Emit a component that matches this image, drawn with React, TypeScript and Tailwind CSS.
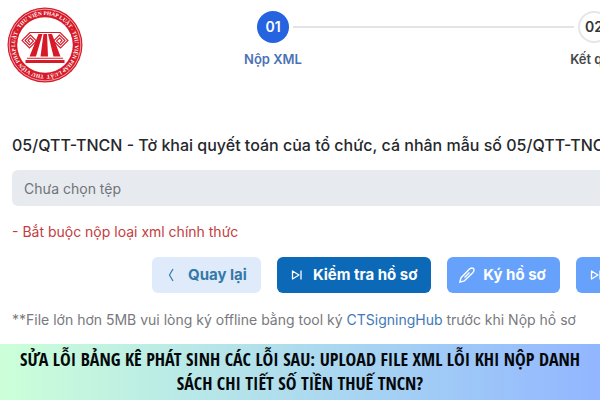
import type { ReactNode } from 'react';

function SkipIcon() {
  return (
    <svg className="size-4 shrink-0" viewBox="0 0 16 16" fill="none" stroke="currentColor" strokeWidth="1.3" strokeLinejoin="round" aria-hidden="true">
      <path d="M3.5 4 L10 8 L3.5 12 Z M12 3.5 V12.5" />
    </svg>
  );
}

function ChevronIcon() {
  return (
    <svg className="size-4 shrink-0" viewBox="0 0 16 16" fill="none" stroke="currentColor" strokeWidth="1.2" aria-hidden="true">
      <path d="M9 2 L5.5 8 L9 14" />
    </svg>
  );
}

function PenIcon() {
  return (
    <svg className="size-4 shrink-0" viewBox="0 0 16 16" fill="none" stroke="currentColor" strokeWidth="1.4" strokeLinejoin="round" aria-hidden="true">
      <path d="M.8 15.2 L2 10.8 L10.5 2 Q12.8 .2 14.4 1.4 Q15.8 3 14 5.4 L5.4 13.8 Z M10.5 5.5 L5.5 10.5" />
    </svg>
  );
}

function Logo() {
  return (
    <svg className="size-20 shrink-0" viewBox="0 0 80 80" role="img" aria-label="Thư Viện Pháp Luật">
      <defs>
        <path id="ring" d="M40 70 A30 30 0 0 1 40 10 A30 30 0 0 1 40 70" />
      </defs>
      <circle cx="40" cy="40" r="37.5" fill="#d71a28" />
      <circle cx="40" cy="40" r="35.8" fill="none" stroke="#fff" strokeWidth=".6" />
      <circle cx="40" cy="40" r="27.8" fill="#fff" />
      <text fill="#fff" fontFamily="Liberation Serif, serif" fontWeight="700" fontSize="5.4">
        <textPath href="#ring" startOffset="1">THƯ VIỆN PHÁP LUẬT - THƯ VIỆN PHÁP LUẬT - THƯ VIỆN PHÁP LUẬT -</textPath>
      </text>
      <g fill="none" stroke="#d71a28" strokeWidth="1.1">
        <path d="M25 27.5 H55 M25 27.5 L17 35.5 L24.5 43 L31.5 36 L25.5 30 L20 35.5 L24.5 40 L28.5 36 L25.3 33 L23 35.5 L25 37.5" />
        <path d="M55 27.5 L63 35.5 L55.5 43 L48.5 36 L54.5 30 L60 35.5 L55.5 40 L51.5 36 L54.7 33 L57 35.5 L55 37.5" />
      </g>
      <g fill="#d71a28">
        <path d="M33.5 29 H37.5 L31 51.5 H24.5 Z M38.5 29 H42 L43 51.5 H35.5 Z M43 29 H47 L55.5 51.5 H48.5 Z" />
        <path d="M22 52.8 H58 V53.8 H22 Z" />
        <path d="M20.5 55 H59.5 V58 H20.5 Z" />
      </g>
    </svg>
  );
}

function Step({ number, label, active = false }: { number: string; label: string; active?: boolean }) {
  return (
    <li className="flex w-10 shrink-0 flex-col items-center gap-2">
      <span
        className={
          active
            ? 'flex size-8 items-center justify-center rounded-full bg-[#2563e0] text-sm font-semibold text-white'
            : 'flex size-8 items-center justify-center rounded-full border-2 border-[#e4e6e9] text-sm font-semibold text-[#333539]'
        }
      >
        {number}
      </span>
      <span className={active ? 'text-[13px] leading-4 font-semibold whitespace-nowrap text-[#4b72b4]' : 'text-[13px] leading-4 font-semibold whitespace-nowrap text-[#45474b]'}>
        {label}
      </span>
    </li>
  );
}

function ActionButton({ icon, tone, children }: { icon: ReactNode; tone: string; children: ReactNode }) {
  return (
    <button type="button" className={`flex h-9 shrink-0 items-center gap-2 rounded-md pr-3.5 pl-3 text-[15px] font-bold whitespace-nowrap ${tone}`}>
      {icon}
      {children}
    </button>
  );
}

export default function App() {
  return (
    <div className="overflow-hidden bg-white font-['Inter','Noto_Sans',sans-serif]">
      <header className="flex h-[120px] items-start">
        <div className="pt-[5px] pl-[5px]">
          <Logo />
        </div>
        <ol className="ml-[168px] flex min-w-0 flex-1 pt-[11px]">
          <Step number="01" label="Nộp XML" active />
          <li aria-hidden="true" className="mt-[15px] h-[2px] w-[281px] shrink-0 bg-[#e2e4e7]" />
          <Step number="02" label="Kết quả" />
        </ol>
      </header>

      <main className="pl-3">
        <label htmlFor="file-name" className="block pt-[13px] text-base leading-6 font-medium whitespace-nowrap text-[#26282c]">
          05/QTT-TNCN - Tờ khai quyết toán của tổ chức, cá nhân mẫu số 05/QTT-TNCN
        </label>
        <input
          id="file-name"
          type="text"
          readOnly
          value="Chưa chọn tệp"
          className="mt-[13px] block h-9 w-full rounded-l-md bg-[#e7eaef] px-3 text-sm text-[#707379] outline-none"
        />
        <p className="mt-4 text-sm leading-5 text-[#c43c40]">- Bắt buộc nộp loại xml chính thức</p>
        <div className="mt-[15px] flex gap-4 pl-[140px]">
          <ActionButton tone="bg-[#dfebfa] text-[#3479a8]" icon={<ChevronIcon />}>Quay lại</ActionButton>
          <ActionButton tone="bg-[#0b69b7] text-white" icon={<SkipIcon />}>Kiểm tra hồ sơ</ActionButton>
          <ActionButton tone="bg-[#66a1fc] text-white" icon={<PenIcon />}>Ký hồ sơ</ActionButton>
          <ActionButton tone="bg-[#66a1fc] text-white" icon={<SkipIcon />}>Nộp hồ sơ</ActionButton>
        </div>
        <p className="mt-[17px] pb-[14px] text-sm leading-5 whitespace-nowrap text-[#77797d]">
          **File lớn hơn 5MB vui lòng ký offline bằng tool ký{' '}
          <a href="#signing-hub" className="text-[#4178b8]">CTSigningHub</a> trước khi Nộp hồ sơ
        </p>
      </main>

      <footer className="bg-linear-to-r from-[#ccffd8] to-[#92b6ff] px-3 pt-[3px] pb-[5px]">
        <h1 className="text-center font-['Liberation_Sans_Narrow','Open_Sans_Condensed','DejaVu_Sans_Condensed',sans-serif] text-lg leading-6 font-bold text-[#05080a]">
          SỬA LỖI BẢNG KÊ PHÁT SINH CÁC LỖI SAU: UPLOAD FILE XML LỖI KHI NỘP DANH SÁCH CHI TIẾT SỐ TIỀN THUẾ TNCN?
        </h1>
      </footer>
    </div>
  );
}
